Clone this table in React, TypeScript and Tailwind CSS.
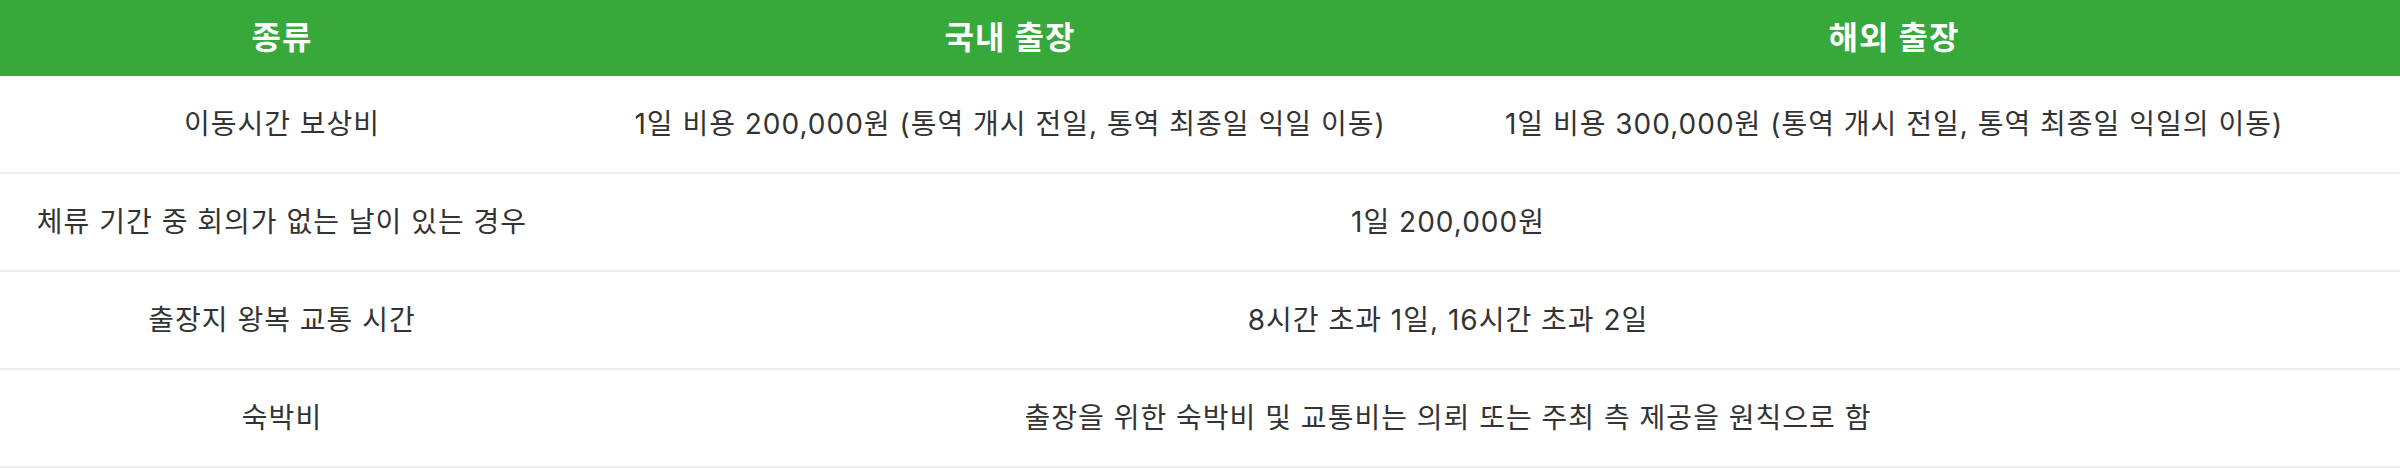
const rows: { label: string; domestic: string; overseas?: string }[] = [
  {
    label: "이동시간 보상비",
    domestic: "1일 비용 200,000원 (통역 개시 전일, 통역 최종일 익일 이동)",
    overseas: "1일 비용 300,000원 (통역 개시 전일, 통역 최종일 익일의 이동)",
  },
  { label: "체류 기간 중 회의가 없는 날이 있는 경우", domestic: "1일 200,000원" },
  { label: "출장지 왕복 교통 시간", domestic: "8시간 초과 1일, 16시간 초과 2일" },
  { label: "숙박비", domestic: "출장을 위한 숙박비 및 교통비는 의뢰 또는 주최 측 제공을 원칙으로 함" },
];

function App() {
  return (
    <div className="w-[2400px] bg-white font-['Inter','Noto_Sans_CJK_KR',sans-serif] text-[#333333]">
      {/* header */}
      <div className="grid h-[76px] grid-cols-[564px_892px_1fr] items-center bg-[#37a83a] pr-[68px] text-[32px] font-semibold tracking-[1px] text-white">
        <div className="text-center">종류</div>
        <div className="text-center">국내 출장</div>
        <div className="text-center">해외 출장</div>
      </div>

      {rows.map((row) => (
        <div
          key={row.label}
          className="grid h-[98px] grid-cols-[564px_892px_1fr] items-center border-b-2 border-[#eeeeee] pr-[68px] text-[28px] tracking-[1px]"
        >
          <div className="text-center">{row.label}</div>
          {row.overseas ? (
            <>
              <div className="text-center">{row.domestic}</div>
              <div className="text-center">{row.overseas}</div>
            </>
          ) : (
            <div className="col-span-2 text-center">{row.domestic}</div>
          )}
        </div>
      ))}
    </div>
  );
}

export default App;
